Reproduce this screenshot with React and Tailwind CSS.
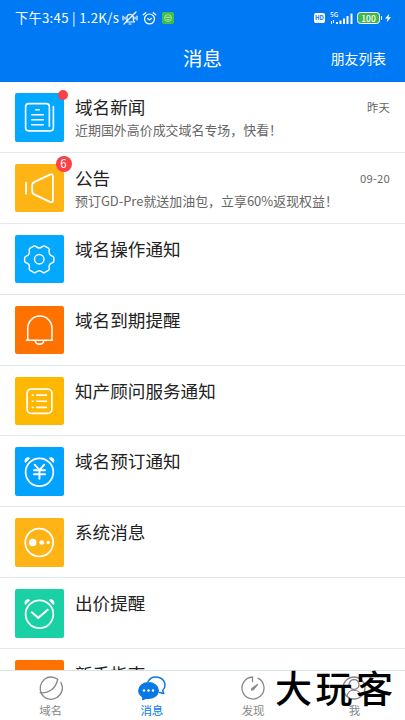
import React from "react";

const line = { fill: "none", stroke: "currentColor", strokeLinecap: "round", strokeLinejoin: "round" };

function NewsIcon() {
  return (
    <svg viewBox="0 0 48 48" className="size-full" {...line} strokeWidth="1.6">
      <path d="M34.500 37.500H13.500a3 3 0 0 1-3-3V13.500a3 3 0 0 1 3-3h17.500a3 3 0 0 1 3 3V33M38 13.500V34.500a3 3 0 0 1-3 3h-3" />
      <path d="M20.500 16.500h3.500M16.500 21.500h11.500M16.500 26.500h11.500M16.500 31.500h11.500" strokeWidth="1.500" />
    </svg>
  );
}

function SpeakerIcon() {
  return (
    <svg viewBox="0 0 48 48" className="size-full" {...line} strokeWidth="1.8">
      <path d="M11 18.500v11M19 18l15.500-7.500q3-1 3 1.500v24q0 2.500-3 1.500L19 30q-2-1-2-3v-6q0-2 2-3z" />
    </svg>
  );
}

function GearIcon() {
  return (
    <svg viewBox="0 0 48 48" className="size-full" {...line} strokeWidth="1.4">
      <circle cx="24" cy="24" r="4.700" />
      <path d="M18.500 11q1.500-.7 2.500.5 3 2.600 6 0 1-1.200 2.500-.5l3.500 2q1.300 1 .8 2.500-.5 4.500 3.200 5.500 1.500.5 1.500 2v2.500q0 1.500-1.500 2-3.700 1-3.200 5 .5 1.600-.8 2.600l-3.500 2q-1.500.7-2.500-.5-3-2.600-6 0-1 1.200-2.500.5l-3.500-2q-1.300-1-.8-2.600.5-4-3.200-5-1.500-.5-1.500-2V23q0-1.500 1.500-2 3.700-1 3.200-5.500-.5-1.500.8-2.500z" />
    </svg>
  );
}

function BellIcon() {
  return (
    <svg viewBox="0 0 48 48" className="size-full" {...line} strokeWidth="1.5">
      <path d="M11.500 34h25.500M12.600 34V22a12 12 0 0 1 24 0v12M20 34.500c.8 4.300 7.700 4.300 8.500 0" />
    </svg>
  );
}

function ListIcon() {
  return (
    <svg viewBox="0 0 48 48" className="size-full" {...line} strokeWidth="1.7">
      <rect x="12" y="12" width="24.500" height="24" rx="4" />
      <path d="M21.500 18h9.500M21.500 24h9.500M21.500 30h9.500M17.300 18h.5M17.300 24h.5M17.300 30h.5" />
    </svg>
  );
}

function ClockFace({ children }) {
  return (
    <svg viewBox="0 0 48 48" className="size-full" {...line} strokeWidth="1.7">
      <circle cx="24.200" cy="25" r="13.700" />
      <path d="M10 14.500c-.5-2.500 1.500-4.500 4.300-3.500L10.500 15zM38.400 14.500c.5-2.500-1.500-4.500-4.300-3.500l3.800 4z" fill="currentColor" strokeWidth="1" />
      {children}
    </svg>
  );
}

function YenIcon() {
  return (
    <ClockFace>
      <path d="M19.500 17.500l4.700 5.500 4.700-5.500M24.200 23V31.500M18.700 23h11M18.700 27h11" strokeWidth="1.900" />
    </ClockFace>
  );
}

function CheckIcon() {
  return (
    <ClockFace>
      <path d="M16 22.500l7 6 10-8.500" strokeWidth="2" strokeLinecap="butt" strokeLinejoin="miter" />
    </ClockFace>
  );
}

function DotsIcon() {
  return (
    <svg viewBox="0 0 48 48" className="size-full" {...line} strokeWidth="1.7">
      <circle cx="24" cy="24.300" r="13.800" />
      <g fill="currentColor" stroke="none">
        <circle cx="17.500" cy="24.300" r="3.700" />
        <circle cx="26.400" cy="24.300" r="2.400" />
        <circle cx="32.800" cy="24.300" r="1.700" />
      </g>
    </svg>
  );
}

function GuideIcon() {
  return (
    <svg viewBox="0 0 48 48" className="size-full" {...line} strokeWidth="1.6">
      <path d="M24 17v19M24 17c-3-2.500-7-3-12-3v19c5 0 9 .5 12 3 3-2.500 7-3 12-3V14c-5 0-9 .5-12 3z" />
    </svg>
  );
}

const rows = [
  { title: "域名新闻", text: "近期国外高价成交域名专场，快看！", date: "昨天", color: "bg-[#02a9ff]", Icon: NewsIcon, dot: true },
  { title: "公告", text: "预订GD-Pre就送加油包，立享60%返现权益！", date: "09-20", color: "bg-[#ffb416]", Icon: SpeakerIcon, badge: "6" },
  { title: "域名操作通知", color: "bg-[#02a9ff]", Icon: GearIcon },
  { title: "域名到期提醒", color: "bg-[#ff7200]", Icon: BellIcon },
  { title: "知产顾问服务通知", color: "bg-[#ffb802]", Icon: ListIcon },
  { title: "域名预订通知", color: "bg-[#02a2ff]", Icon: YenIcon },
  { title: "系统消息", color: "bg-[#ffb416]", Icon: DotsIcon },
  { title: "出价提醒", color: "bg-[#1ad1a5]", Icon: CheckIcon },
  { title: "新手指南", color: "bg-[#ff7200]", Icon: GuideIcon },
];

function Row({ title, text, date, color, Icon, dot, badge }) {
  return (
    <li className="flex h-[70.9px] shrink-0 border-b border-[#e1e7ea] pl-[15px] pr-[15px] pt-[11px]">
      <div className={`relative size-[48.500px] shrink-0 rounded-[2px] text-white ${color}`}>
        <Icon />
        {dot && <span className="absolute -right-[4px] -top-[3px] size-[10px] rounded-full bg-[#fa4048]" />}
        {badge && (
          <span className="absolute -right-[8px] -top-[8px] flex size-4 items-center justify-center rounded-full bg-[#fa4048] text-[11.500px] leading-none">
            {badge}
          </span>
        )}
      </div>
      <div className="ml-[11.500px] min-w-0 flex-1">
        <div className="flex justify-between">
          <h2 className="text-[17.600px] leading-[28px] text-[#222]">{title}</h2>
          {date && <time className="text-[11.300px] leading-[29px] tracking-[0.2px] text-[#666]">{date}</time>}
        </div>
        {text && <p className="-mt-[2px] whitespace-nowrap text-[12.950px] leading-[20px] text-[#666]">{text}</p>}
      </div>
    </li>
  );
}

function StatusBar() {
  return (
    <div className="flex h-9 items-center pl-[15px] pr-[14px]">
      <span className="w-[105px] whitespace-nowrap text-[13.200px] leading-5 tracking-[0.3px]">下午3:45 | 1.2K/s</span>
      <svg className="ml-[2px] h-4 w-4" viewBox="0 0 16 16" {...line} strokeWidth="1.200">
        <path d="M4 12h8.500l-1.200-2V7A3.300 3.300 0 0 0 5 6.500V10zM7 14h2M2 14L14 2M1 6v4M15 6v4M3 7v2M13 7v2" />
      </svg>
      <svg className="ml-[4px] h-[15px] w-[15px]" viewBox="0 0 16 16" {...line} strokeWidth="1.300">
        <circle cx="8" cy="8.500" r="5.300" />
        <path d="M1.300 4L4 1.800M14.700 4L12 1.800M6 8l2 1.500L10 8" />
      </svg>
      <svg className="ml-[5px] size-3" viewBox="0 0 12 12">
        <rect width="12" height="12" rx="2" fill="#45bd4c" />
        <g fill="none" stroke="#b9edb0" strokeWidth=".8">
          <circle cx="6" cy="6" r="3.400" />
          <path d="M3.500 5.500h5M4.500 7.500h3M5 4.300v.5M7 4.300v.5" />
        </g>
      </svg>
      <div className="ml-auto flex items-center">
        <span className="flex h-[10px] w-[11px] items-center justify-center rounded-[2px] bg-white text-[6px] font-bold leading-none text-[#0378ed]">HD</span>
        <div className="ml-[5px] h-[14px] w-6">
          <div className="h-[6px] w-3 text-[6.500px] font-medium leading-[6px]">5G</div>
          <svg className="-mt-[5px] h-[13px] w-6" viewBox="0 0 24 13" fill="currentColor">
            <path d="M1 9h1v3H1zM3 8h1v3H3zM6 10h2v2H6zM9.500 8.500h2V12h-2zM13 6.500h2V12h-2zM16.500 4h2v8h-2zM20.500 1.500h2V12h-2z" />
          </svg>
        </div>
        <span className="ml-[3px] flex h-[12px] w-[23px] items-center justify-center rounded-[3.500px] border border-white bg-[#42b84b] text-[8.500px] font-medium leading-none">100</span>
        <span className="ml-px h-1 w-px bg-white" />
        <svg className="ml-[3px] h-[10px] w-[6px]" viewBox="0 0 7 10" fill="currentColor">
          <path d="M5 0L0 5.700h3L2 10l5-6H4z" />
        </svg>
      </div>
    </div>
  );
}

function Tab({ label, active, children }) {
  return (
    <div className={`flex flex-1 flex-col items-center pt-[4px] ${active ? "text-[#0878e4]" : "text-[#888]"}`}>
      <svg className="h-[26px] w-[30px]" viewBox="0 0 30 26" {...line} strokeWidth="1.300">{children}</svg>
      <span className="text-[11.500px] leading-[18px]">{label}</span>
    </div>
  );
}

export default function App() {
  return (
    <div className="relative flex h-[720px] w-[405px] flex-col overflow-hidden bg-white font-['Noto_Sans_CJK_SC',sans-serif]">
      <header className="h-[82px] shrink-0 bg-[#007af4] text-white">
        <StatusBar />
        <div className="grid h-[44px] grid-cols-3 items-center">
          <h1 className="col-start-2 text-center text-[19.500px] leading-7">消息</h1>
          <span className="pr-[19px] text-right text-[13.800px] leading-5">朋友列表</span>
        </div>
      </header>
      <ul className="flex min-h-0 flex-1 flex-col overflow-hidden">
        {rows.map((r) => <Row key={r.title} {...r} />)}
      </ul>
      <nav className="flex h-[50px] shrink-0 border-t border-[#d8e3e9] bg-white">
        <Tab label="域名">
          <path d="M21.500 4.200C18 1.500 12.500 1 8.500 4.300 4 8 3 14 5.500 18.800 8.500 24 15 26 20.500 22.800 26 19.500 28 13 24.800 7.300" />
          <path d="M4.200 17.500c7 1.500 15.500-3 17.500-13" />
        </Tab>
        <Tab label="消息" active>
          <path d="M11 6.500C13 3 17 1.300 21 2.200c7 1.500 9 8.500 4.700 13.300l1 3-4-1" strokeWidth="1.500" />
          <path d="M11.500 7.700c-5.500 0-9.700 3.500-9.700 7.800 0 2.700 1.600 5 4 6.400v2.700l3.500-1.400c6.700 1 12-2.800 12-7.700 0-4.300-4.300-7.800-9.800-7.800z" fill="currentColor" />
          <g fill="#fff" stroke="none"><circle cx="7" cy="15.500" r="1.200" /><circle cx="11.500" cy="15.500" r="1.200" /><circle cx="16" cy="15.500" r="1.200" /></g>
        </Tab>
        <Tab label="发现">
          <path d="M14.500 2v4.500M14.500 2A11 11 0 1 0 20 3.200" />
          <path d="M19.500 9.500L14 13.500l-.5 1.500 1.800-.3z" fill="currentColor" />
        </Tab>
        <Tab label="我">
          <circle cx="15" cy="13" r="11" />
          <circle cx="15" cy="9.500" r="5" />
          <path d="M8 21.500c1-8.500 13-8.500 14 0" />
        </Tab>
      </nav>
      <div className="absolute left-[275px] top-[668px] whitespace-nowrap text-[37px] font-medium leading-[38px] tracking-[3.500px] text-black">大玩客</div>
    </div>
  );
}
